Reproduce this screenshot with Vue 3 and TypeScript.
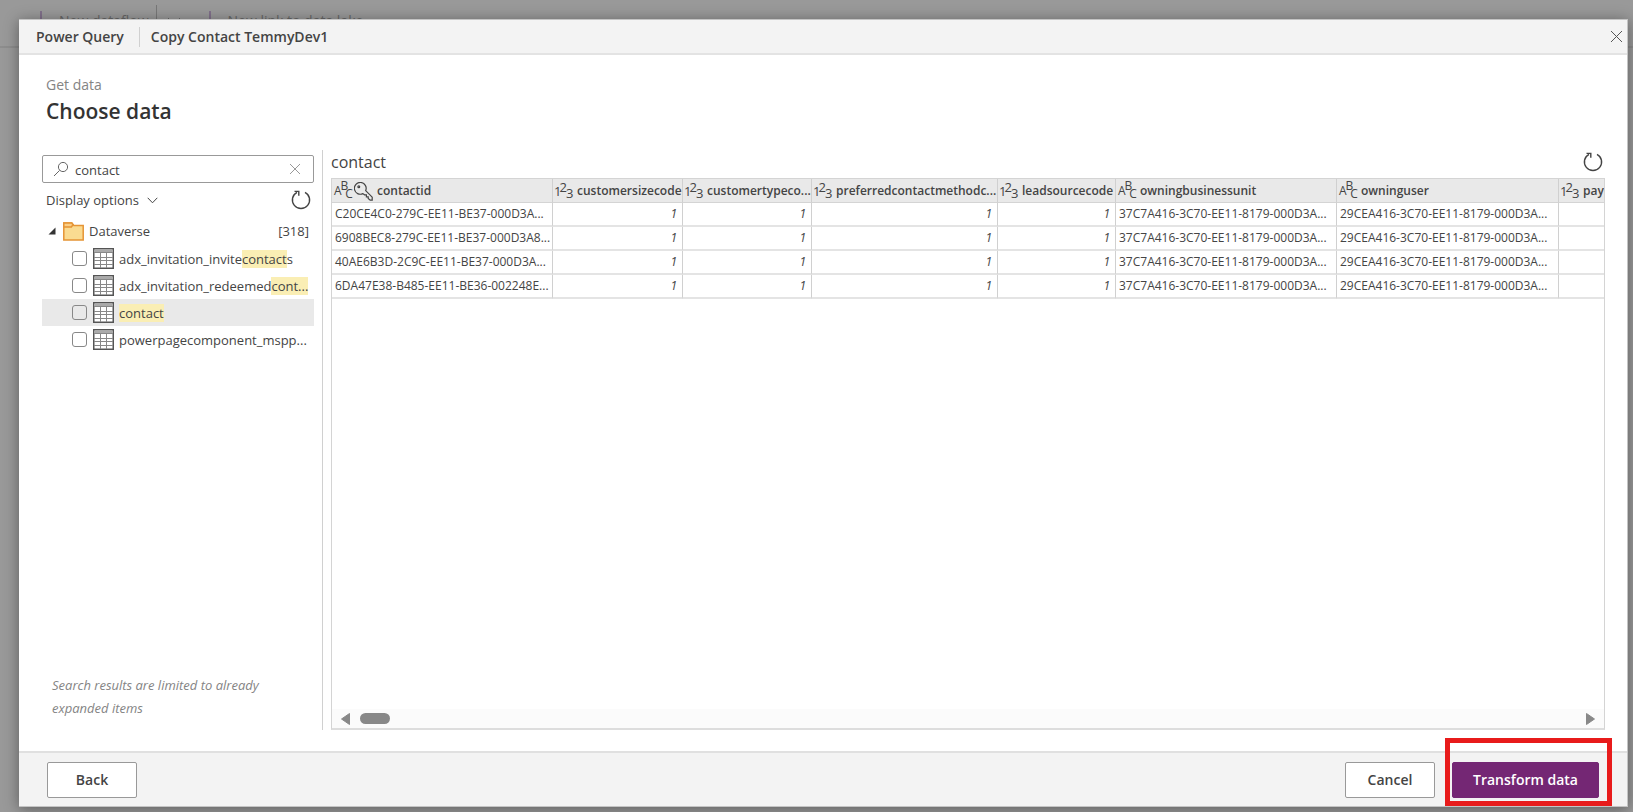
<script setup lang="ts">
import { ref } from 'vue'

interface TextPart {
  text: string
  match?: boolean
}

interface TreeItem {
  id: string
  parts: TextPart[]
  selected?: boolean
}

interface Column {
  name: string
  kind: 'text' | 'number'
  width: number
  key?: boolean
}

const search = ref('contact')

const items: TreeItem[] = [
  { id: 'invite', parts: [{ text: 'adx_invitation_invite' }, { text: 'contact', match: true }, { text: 's' }] },
  { id: 'redeemed', parts: [{ text: 'adx_invitation_redeemed' }, { text: 'cont...', match: true }] },
  { id: 'contact', parts: [{ text: 'contact', match: true }], selected: true },
  { id: 'component', parts: [{ text: 'powerpagecomponent_mspp...' }] },
]

const columns: Column[] = [
  { name: 'contactid', kind: 'text', width: 221, key: true },
  { name: 'customersizecode', kind: 'number', width: 130 },
  { name: 'customertypeco...', kind: 'number', width: 129 },
  { name: 'preferredcontactmethodc...', kind: 'number', width: 186 },
  { name: 'leadsourcecode', kind: 'number', width: 118 },
  { name: 'owningbusinessunit', kind: 'text', width: 221 },
  { name: 'owninguser', kind: 'text', width: 222 },
  { name: 'payr', kind: 'number', width: 150 },
]

const unit = '37C7A416-3C70-EE11-8179-000D3A...'
const user = '29CEA416-3C70-EE11-8179-000D3A...'
const rows: string[][] = [
  'C20CE4C0-279C-EE11-BE37-000D3A...',
  '6908BEC8-279C-EE11-BE37-000D3A8...',
  '40AE6B3D-2C9C-EE11-BE37-000D3A...',
  '6DA47E38-B485-EE11-BE36-002248E...',
].map((id) => [id, '1', '1', '1', '1', unit, user, ''])
</script>

<template>
  <div class="page">
    <nav class="toolbar" aria-label="Dataflow actions">
      <span class="tool first">New dataflow</span>
      <span class="tool-more">
        <svg width="14" height="8" viewBox="0 0 14 8"><path d="M1 1l6 6 6-6" /></svg>
      </span>
      <span class="tool second">New link to data lake</span>
    </nav>

    <section class="dialog" role="dialog" aria-labelledby="dialog-title">
      <header class="titlebar">
        <span class="product">Power Query</span>
        <span class="query-name">Copy Contact TemmyDev1</span>
        <button class="icon-button close" type="button" aria-label="Close">
          <svg width="13" height="13" viewBox="0 0 13 13"><path d="M1 1l11 11M12 1L1 12" /></svg>
        </button>
      </header>

      <div class="heading">
        <p>Get data</p>
        <h1 id="dialog-title">Choose data</h1>
      </div>

      <main class="content">
        <aside class="navigator">
          <div class="search">
            <svg class="search-icon" width="16" height="16" viewBox="0 0 16 16">
              <circle cx="10" cy="6" r="4.6" />
              <path d="M6.6 9.4L1 15" />
            </svg>
            <input v-model="search" type="text" aria-label="Search" />
            <button class="icon-button clear" type="button" aria-label="Clear search">
              <svg width="12" height="12" viewBox="0 0 12 12"><path d="M1 1l10 10M11 1L1 11" /></svg>
            </button>
          </div>

          <div class="options">
            <button class="display-options" type="button">
              Display options
              <svg width="11" height="7" viewBox="0 0 11 7"><path d="M.7.8l4.8 5 4.8-5" /></svg>
            </button>
            <button class="icon-button" type="button" aria-label="Refresh list">
              <svg class="refresh" width="20" height="20" viewBox="0 0 20 20">
                <path d="M14 2.300A8.600 8.600 0 1 1 6 2.300" />
                <path d="M3.500 1.400h4.300v4.300" />
              </svg>
            </button>
          </div>

          <div class="root">
            <svg class="caret" width="8" height="8" viewBox="0 0 8 8"><path d="M7.5.5v7H.5z" /></svg>
            <svg class="folder" width="21" height="19" viewBox="0 0 21 19">
              <path d="M.8 18V1h8l2 2.5h9.400V18z" />
              <path class="tab" d="M.8 1h8l1.200 1.800L8.400 5H.8z" />
            </svg>
            <span>Dataverse</span>
            <span class="count">[318]</span>
          </div>

          <ul class="items">
            <li v-for="item in items" :key="item.id" :class="{ selected: item.selected }">
              <input :id="item.id" type="checkbox" />
              <svg class="table-icon" width="21" height="21" viewBox="0 0 21 21">
                <rect class="frame" x=".75" y=".75" width="19.500" height="19.500" />
                <rect class="band" x="1.500" y="1.500" width="18" height="2.500" />
                <path d="M1 4.500h19M1 9.500h19M1 12.500h19M1 16.500h19M7.500 4.500V20M13.500 4.500V20" />
              </svg>
              <label :for="item.id"><span
                v-for="(part, i) in item.parts"
                :key="i"
                :class="{ match: part.match }"
              >{{ part.text }}</span></label>
            </li>
          </ul>

          <p class="note">Search results are limited to already expanded items</p>
        </aside>

        <section class="preview">
          <div class="preview-title">
            <h2>contact</h2>
            <button class="icon-button" type="button" aria-label="Refresh preview">
              <svg class="refresh" width="20" height="20" viewBox="0 0 20 20">
                <path d="M14 2.300A8.600 8.600 0 1 1 6 2.300" />
                <path d="M3.500 1.400h4.300v4.300" />
              </svg>
            </button>
          </div>

          <div class="grid">
            <div class="grid-view">
              <table>
                <colgroup>
                  <col v-for="c in columns" :key="c.name" :style="{ width: c.width + 'px' }" />
                </colgroup>
                <thead>
                  <tr>
                    <th v-for="c in columns" :key="c.name" scope="col">
                      <div class="head">
                        <span v-if="c.kind === 'text'" class="type abc"><i>A</i><i>B</i><i>C</i></span>
                        <span v-else class="type num"><i>1</i><i>2</i><i>3</i></span>
                        <svg v-if="c.key" class="key" width="19" height="19" viewBox="0 0 19 19">
                          <path d="M11.700 8.600A5.900 5.900 0 1 0 8.900 11.600L10.500 12.800H12.400V14.800H14.200V16.400L16.200 18.200H18.200V15.200Z" />
                          <circle cx="4.800" cy="4.800" r=".9" />
                        </svg>
                        <span>{{ c.name }}</span>
                      </div>
                    </th>
                  </tr>
                </thead>
                <tbody>
                  <tr v-for="row in rows" :key="row[0]">
                    <td v-for="(cell, i) in row" :key="i" :class="columns[i].kind">{{ cell }}</td>
                  </tr>
                </tbody>
              </table>
            </div>
            <div class="scrollbar">
              <button type="button" aria-label="Scroll left">
                <svg width="9" height="12" viewBox="0 0 9 12"><path d="M8.500.5v11L.5 6z" /></svg>
              </button>
              <span class="thumb"></span>
              <button class="right" type="button" aria-label="Scroll right">
                <svg width="9" height="12" viewBox="0 0 9 12"><path d="M.5.5v11l8-5.500z" /></svg>
              </button>
            </div>
          </div>
        </section>
      </main>

      <footer class="actions">
        <button class="button" type="button">Back</button>
        <button class="button cancel" type="button">Cancel</button>
        <div class="callout">
          <button class="button primary" type="button">Transform data</button>
        </div>
      </footer>
    </section>
  </div>
</template>

<style>
body {
  margin: 0;
  background: #999;
}
</style>

<style scoped>
* {
  box-sizing: border-box;
}
.page {
  position: relative;
  height: 100vh;
  overflow: hidden;
  background: #999;
  color: #444;
  font: 14px/20px "Segoe UI", "Open Sans", "Noto Sans", sans-serif;
}
button,
input {
  font: inherit;
  color: inherit;
}
h1,
h2,
p,
ul {
  margin: 0;
  padding: 0;
}
svg {
  display: block;
  flex: none;
  fill: none;
  stroke: currentColor;
}
.toolbar {
  display: flex;
  align-items: flex-end;
  height: 48px;
  padding: 0 0 17px 40px;
  border-bottom: 2px solid #8d8d8d;
  color: #666;
}
.tool {
  height: 18px;
  padding-left: 17px;
  border-left: 2px solid #80708a;
}
.tool-more {
  height: 24px;
  margin-left: 7px;
  padding: 12px 28px 0 10px;
  border-left: 1px solid #777;
}
.dialog {
  position: absolute;
  inset: 19px 5px 5px 19px;
  display: flex;
  flex-direction: column;
  background: #fff;
  border: 1px solid #c4c4c4;
  border-width: 1px 1px 1px 0;
  box-shadow: 0 2px 14px rgba(0, 0, 0, 0.4);
}
.titlebar {
  display: flex;
  flex: none;
  align-items: center;
  height: 35px;
  padding: 0 4px 0 17px;
  background: #f3f3f3;
  border-bottom: 2px solid #e3e3e3;
  font-weight: 600;
}
.query-name {
  margin-left: 15px;
  padding-left: 11px;
  border-left: 1px solid #d0d0d0;
}
.icon-button {
  padding: 0;
  border: 0;
  background: none;
}
.close {
  margin-left: auto;
  color: #555;
}
.heading {
  padding: 20px 27px 0;
}
.heading p {
  color: #848484;
}
.heading h1 {
  margin-top: 2px;
  color: #333;
  font-size: 21px;
  font-weight: 600;
  line-height: 28px;
}
.content {
  display: flex;
  flex: 1;
  min-height: 0;
  margin: 25px 22px 21px 23px;
}
.navigator {
  display: flex;
  flex: none;
  flex-direction: column;
  width: 281px;
  padding: 5px 8px 10px 0;
  border-right: 1px solid #d0d0d0;
}
.search {
  display: flex;
  flex: none;
  align-items: center;
  height: 28px;
  padding: 0 12px 0 10px;
  border: 1px solid #999;
  border-radius: 2px;
}
.search input {
  flex: 1;
  min-width: 0;
  padding: 2px 6px 0;
  border: 0;
  outline: 0;
  background: none;
  font-size: 13px;
}
.search-icon {
  color: #666;
}
.clear {
  color: #999;
}
.options {
  display: flex;
  align-items: center;
  justify-content: space-between;
  height: 34px;
  padding: 0 3px 0 4px;
}
.display-options {
  display: flex;
  align-items: center;
  gap: 8px;
  padding: 0;
  border: 0;
  background: none;
  font-size: 13px;
}
.refresh {
  color: #444;
  stroke-width: 1.4;
}
.root {
  display: flex;
  align-items: center;
  height: 28px;
  padding: 0 5px 0 6px;
  font-size: 13px;
}
.caret {
  fill: #333;
  stroke: none;
}
.folder {
  margin: 0 5px 0 7px;
  fill: #fadb91;
  stroke: #e59435;
  stroke-width: 1.5;
}
.folder .tab {
  fill: #fbcf86;
}
.count {
  margin-left: auto;
}
.items {
  list-style: none;
  font-size: 13px;
}
.items li {
  display: flex;
  align-items: center;
  height: 27px;
  padding-left: 30px;
  overflow: hidden;
  white-space: nowrap;
}
.items li.selected {
  background: #e9e9e9;
}
.items input {
  appearance: none;
  flex: none;
  width: 15px;
  height: 15px;
  margin: 0 6px 0 0;
  border: 1px solid #888;
  border-radius: 3px;
}
.table-icon {
  margin-right: 5px;
  color: #888;
}
.table-icon .frame {
  fill: #fff;
  stroke: #555;
  stroke-width: 1.500;
}
.table-icon .band {
  fill: #aaa;
  stroke: none;
}
.match {
  background: #faeeb4;
}
.note {
  margin-top: auto;
  padding: 0 10px;
  color: #848484;
  font-size: 13px;
  font-style: italic;
  line-height: 23px;
}
.preview {
  display: flex;
  flex: 1;
  flex-direction: column;
  min-width: 0;
  padding-left: 8px;
}
.preview-title {
  display: flex;
  flex: none;
  align-items: center;
  justify-content: space-between;
  height: 28px;
  padding: 0 2px 4px 0;
}
.preview h2 {
  font-size: 16px;
  font-weight: 400;
}
.grid {
  display: flex;
  flex: 1;
  flex-direction: column;
  min-height: 0;
  border: 1px solid #d4d4d4;
  border-bottom: 2px solid #ddd;
}
.grid-view {
  flex: 1;
  overflow: hidden;
}
table {
  width: 1377px;
  table-layout: fixed;
  border-collapse: separate;
  border-spacing: 0;
  font-size: 12px;
}
th,
td {
  overflow: hidden;
  border-right: 1px solid #d0d0d0;
  text-align: left;
  white-space: nowrap;
}
th {
  height: 24px;
  padding: 0 0 0 1px;
  background: #e9e9e9;
  border-bottom: 1px solid #d4d4d4;
  font-weight: 600;
}
td {
  height: 24px;
  padding: 0 3px;
  border-bottom: 2px solid #e4e4e4;
  line-height: 20px;
}
td.number {
  padding-right: 5px;
  text-align: right;
  font-style: italic;
}
.head {
  display: flex;
  align-items: center;
  height: 23px;
  padding-top: 1px;
}
.type {
  display: flex;
  flex: none;
  height: 20px;
  font-weight: 400;
}
.type i {
  font-style: normal;
}
.num {
  width: 23px;
  font-size: 13px;
}
.num i {
  margin-right: -1px;
}
.num i:nth-child(2) {
  margin: -4px -1px 0 -1px;
}
.num i:nth-child(3) {
  margin-top: 2px;
}
.abc {
  width: 23px;
  padding-left: 1px;
  font-size: 12px;
}
.abc i:nth-child(2) {
  margin: -5px -3px 0 -1px;
}
.abc i:nth-child(3) {
  margin-top: 3px;
}
.key {
  margin: 0 4px 0 -2px;
  stroke-width: 1.200;
}
.scrollbar {
  display: flex;
  flex: none;
  align-items: center;
  height: 19px;
  padding: 0 9px;
  background: #fbfbfb;
}
.scrollbar button {
  padding: 0;
  border: 0;
  background: none;
  color: #888;
}
.scrollbar svg {
  fill: currentColor;
}
.scrollbar .right {
  margin-left: auto;
}
.thumb {
  width: 30px;
  height: 11px;
  margin-left: 10px;
  border-radius: 6px;
  background: #888;
}
.actions {
  display: flex;
  flex: none;
  align-items: center;
  height: 55px;
  padding: 0 28px 0 28px;
  background: #f3f3f3;
  border-top: 2px solid #e0e0e0;
}
.button {
  height: 36px;
  width: 90px;
  padding: 0;
  border: 1px solid #999;
  border-radius: 2px;
  background: #fff;
  font-weight: 600;
}
.cancel {
  margin: 0 17px 0 auto;
}
.callout {
  position: relative;
}
.callout::after {
  content: "";
  position: absolute;
  inset: -24px -13px -8px -7px;
  border: 5px solid #e81b1b;
  pointer-events: none;
}
.primary {
  display: block;
  width: 147px;
  border-color: #742774;
  background: #742774;
  color: #fff;
}
</style>
